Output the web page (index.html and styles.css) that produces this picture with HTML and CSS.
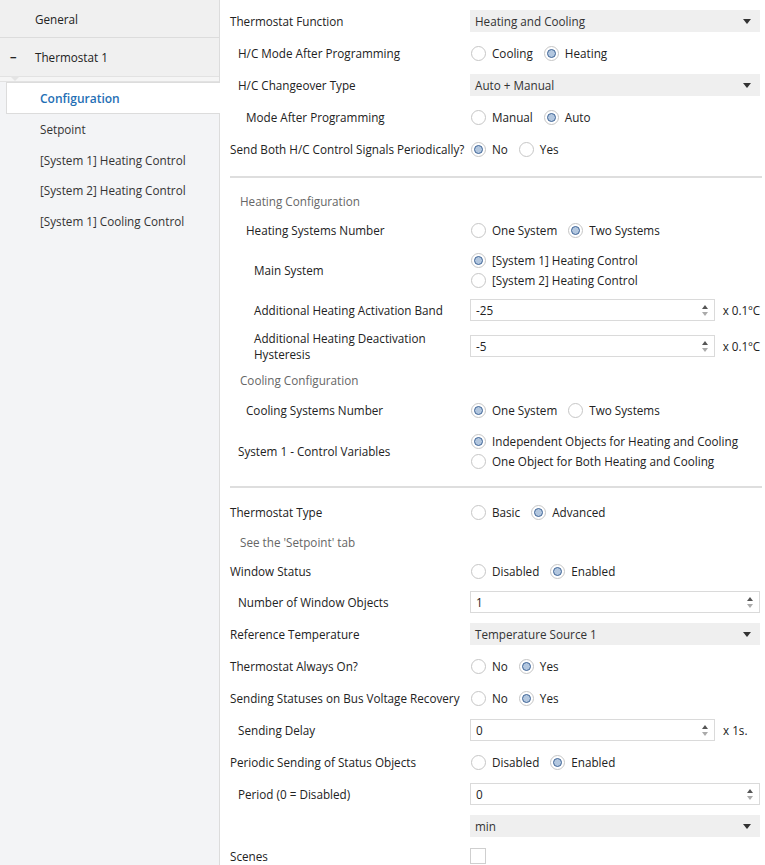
FILE: index.html
```html
<!DOCTYPE html>
<html lang="en">
<head>
<meta charset="UTF-8">
<meta name="viewport" content="width=device-width, initial-scale=1.0">
<title>Thermostat 1 - Configuration</title>
<link rel="stylesheet" href="styles.css">
</head>
<body>

<div class="app">

  <!-- left navigation -->
  <aside class="sidebar">
    <div class="nav-top">General</div>
    <div class="nav-group">
      <div class="nav-head"><span class="collapse">&minus;</span>Thermostat 1</div>
      <div class="nav-foot"><span class="notch"></span></div>
    </div>
    <ul class="nav-list">
      <li class="active">Configuration</li>
      <li>Setpoint</li>
      <li>[System 1] Heating Control</li>
      <li>[System 2] Heating Control</li>
      <li>[System 1] Cooling Control</li>
    </ul>
  </aside>

  <!-- parameters -->
  <main class="params">

    <div class="row">
      <div class="label">Thermostat Function</div>
      <div class="ctrl"><div class="select">Heating and Cooling<span class="caret"></span></div></div>
    </div>
    <div class="row">
      <div class="label l1">H/C Mode After Programming</div>
      <div class="ctrl radios">
        <span class="opt"><i class="radio"></i>Cooling</span>
        <span class="opt"><i class="radio on"></i>Heating</span>
      </div>
    </div>
    <div class="row">
      <div class="label l1">H/C Changeover Type</div>
      <div class="ctrl"><div class="select">Auto + Manual<span class="caret"></span></div></div>
    </div>
    <div class="row">
      <div class="label l2">Mode After Programming</div>
      <div class="ctrl radios">
        <span class="opt"><i class="radio"></i>Manual</span>
        <span class="opt"><i class="radio on"></i>Auto</span>
      </div>
    </div>
    <div class="row">
      <div class="label">Send Both H/C Control Signals Periodically?</div>
      <div class="ctrl radios">
        <span class="opt"><i class="radio on"></i>No</span>
        <span class="opt"><i class="radio"></i>Yes</span>
      </div>
    </div>

    <hr class="sep first">

    <div class="row head short"><div class="note">Heating Configuration</div></div>
    <div class="row">
      <div class="label l2">Heating Systems Number</div>
      <div class="ctrl radios">
        <span class="opt"><i class="radio"></i>One System</span>
        <span class="opt"><i class="radio on"></i>Two Systems</span>
      </div>
    </div>
    <div class="row tall">
      <div class="label l3">Main System</div>
      <div class="ctrl radios stack">
        <span class="opt"><i class="radio on"></i>[System 1] Heating Control</span>
        <span class="opt"><i class="radio"></i>[System 2] Heating Control</span>
      </div>
    </div>
    <div class="row">
      <div class="label l3">Additional Heating Activation Band</div>
      <div class="ctrl unit-wrap">
        <div class="num">-25<span class="spin"></span></div><span class="unit">x 0.1ºC</span>
      </div>
    </div>
    <div class="row two">
      <div class="label l3 wrap">Additional Heating Deactivation Hysteresis</div>
      <div class="ctrl unit-wrap">
        <div class="num">-5<span class="spin"></span></div><span class="unit">x 0.1ºC</span>
      </div>
    </div>

    <div class="row head"><div class="note">Cooling Configuration</div></div>
    <div class="row">
      <div class="label l2">Cooling Systems Number</div>
      <div class="ctrl radios">
        <span class="opt"><i class="radio on"></i>One System</span>
        <span class="opt"><i class="radio"></i>Two Systems</span>
      </div>
    </div>
    <div class="row tall wide">
      <div class="label l1">System 1 - Control Variables</div>
      <div class="ctrl radios stack">
        <span class="opt"><i class="radio on"></i>Independent Objects for Heating and Cooling</span>
        <span class="opt"><i class="radio"></i>One Object for Both Heating and Cooling</span>
      </div>
    </div>

    <hr class="sep second">

    <div class="row">
      <div class="label">Thermostat Type</div>
      <div class="ctrl radios">
        <span class="opt"><i class="radio"></i>Basic</span>
        <span class="opt"><i class="radio on"></i>Advanced</span>
      </div>
    </div>
    <div class="row head"><div class="note">See the 'Setpoint' tab</div></div>
    <div class="row win">
      <div class="label">Window Status</div>
      <div class="ctrl radios">
        <span class="opt"><i class="radio"></i>Disabled</span>
        <span class="opt"><i class="radio on"></i>Enabled</span>
      </div>
    </div>
    <div class="row">
      <div class="label l1">Number of Window Objects</div>
      <div class="ctrl"><div class="num full">1<span class="spin"></span></div></div>
    </div>
    <div class="row">
      <div class="label">Reference Temperature</div>
      <div class="ctrl"><div class="select">Temperature Source 1<span class="caret"></span></div></div>
    </div>
    <div class="row">
      <div class="label">Thermostat Always On?</div>
      <div class="ctrl radios">
        <span class="opt"><i class="radio"></i>No</span>
        <span class="opt"><i class="radio on"></i>Yes</span>
      </div>
    </div>
    <div class="row">
      <div class="label">Sending Statuses on Bus Voltage Recovery</div>
      <div class="ctrl radios">
        <span class="opt"><i class="radio"></i>No</span>
        <span class="opt"><i class="radio on"></i>Yes</span>
      </div>
    </div>
    <div class="row">
      <div class="label l1">Sending Delay</div>
      <div class="ctrl unit-wrap">
        <div class="num">0<span class="spin"></span></div><span class="unit">x 1s.</span>
      </div>
    </div>
    <div class="row">
      <div class="label">Periodic Sending of Status Objects</div>
      <div class="ctrl radios">
        <span class="opt"><i class="radio"></i>Disabled</span>
        <span class="opt"><i class="radio on"></i>Enabled</span>
      </div>
    </div>
    <div class="row">
      <div class="label l1">Period (0 = Disabled)</div>
      <div class="ctrl"><div class="num full">0<span class="spin"></span></div></div>
    </div>
    <div class="row">
      <div class="label"></div>
      <div class="ctrl"><div class="select">min<span class="caret"></span></div></div>
    </div>
    <div class="row head">
      <div class="label">Scenes</div>
      <div class="ctrl"><span class="check"></span></div>
    </div>

  </main>
</div>

</body>
</html>
```

FILE: styles.css
```css
/* page */
body {
  margin: 0;
  font-family: "Open Sans", "Noto Sans", sans-serif;
  font-size: 11.7px;
  color: #222;
  background: #fff;
}

.app {
  display: flex;
  min-height: 865px;
}

/* sidebar */
.sidebar {
  width: 219px;
  flex-shrink: 0;
  background: #f3f4f6;
  border-right: 1px solid #dcdcdc;
}

.nav-top {
  height: 37px;
  line-height: 38px;
  padding-left: 35px;
  background: #f0f0f0;
  border-bottom: 1px solid #dcdcdc;
}

.nav-group {
  background: #f0f0f0;
}

.nav-head {
  height: 38px;
  line-height: 38px;
  padding-left: 10px;
}

.collapse {
  display: inline-block;
  width: 25px;
  font-weight: bold;
}

.nav-foot {
  position: relative;
  height: 4px;
  background: #f5f5f5;
  border-top: 1px solid #e2e2e2;
  border-bottom: 1px solid #e2e2e2;
}

.notch {
  position: absolute;
  left: 10px;
  top: -1px;
  width: 0;
  height: 0;
  border-left: 5px solid transparent;
  border-right: 5px solid transparent;
  border-top: 5px solid #e4e4e4;
}

.nav-list {
  list-style: none;
  margin: 0;
  padding: 0;
}

.nav-list li {
  height: 30.7px;
  line-height: 30px;
  padding-left: 40px;
  color: #333;
}

.nav-list li.active {
  margin-left: 6px;
  margin-right: -1px;
  padding-left: 33px;
  height: 30px;
  line-height: 31px;
  background: #fff;
  border: 1px solid #dcdcdc;
  border-right: none;
  color: #1f6fb5;
  font-weight: 600;
  font-size: 12px;
}

/* parameter rows */
.params {
  flex: 1;
  padding: 5px 3px 0 10px;
}

.row {
  display: flex;
  align-items: center;
  height: 32px;
}

.row.head { height: 28px; }
.row.short { height: 26px; }
.row.tall { height: 48px; }
.row.wide { height: 50px; }
.row.two { height: 40px; }
.row.win { height: 30px; }

.label {
  width: 240px;
  flex-shrink: 0;
  white-space: nowrap;
}

.label.l1 { padding-left: 8px; width: 232px; }
.label.l2 { padding-left: 16px; width: 224px; }
.label.l3 { padding-left: 24px; width: 216px; }

.label.wrap {
  white-space: normal;
  width: 180px;
  padding-right: 36px;
  line-height: 16px;
}

.note {
  padding-left: 10px;
  color: #666;
}

.ctrl {
  width: 290px;
}

.sep {
  border: none;
  border-top: 2px solid #dedede;
  margin: 11px 0 10px 0;
}

.sep.second {
  margin: 10px 0 8px 0;
}

/* select boxes */
.select {
  position: relative;
  height: 22px;
  line-height: 22px;
  padding-left: 5px;
  background: #efefef;
  color: #333;
}

.caret {
  position: absolute;
  right: 9px;
  top: 9px;
  border-left: 4px solid transparent;
  border-right: 4px solid transparent;
  border-top: 5px solid #333;
}

/* radios */
.radios {
  display: flex;
  align-items: center;
}

.radios.stack {
  flex-direction: column;
  align-items: flex-start;
  gap: 4px;
}

.opt {
  display: flex;
  align-items: center;
  height: 16px;
  margin-right: 10px;
  white-space: nowrap;
}

.radio {
  position: relative;
  width: 15px;
  height: 15px;
  margin-left: 1px;
  margin-right: 6px;
  box-sizing: border-box;
  border: 1px solid #c6c6c6;
  border-radius: 50%;
  background: #fff;
}

.radio.on::after {
  content: "";
  position: absolute;
  left: 2px;
  top: 2px;
  width: 9px;
  height: 9px;
  box-sizing: border-box;
  border: 1.5px solid #3e6496;
  border-radius: 50%;
  background: #b3c7df;
}

/* number inputs */
.unit-wrap {
  display: flex;
  align-items: center;
}

.num {
  position: relative;
  width: 245px;
  height: 22px;
  line-height: 20px;
  box-sizing: border-box;
  padding-left: 5px;
  border: 1px solid #dadada;
  background: #fff;
}

.num.full {
  width: 290px;
}

.spin {
  position: absolute;
  right: 6px;
  top: 5px;
  width: 0;
  height: 0;
  border-left: 3px solid transparent;
  border-right: 3px solid transparent;
  border-bottom: 4px solid #555;
}

.spin::after {
  content: "";
  position: absolute;
  left: -3px;
  top: 7px;
  border-left: 3px solid transparent;
  border-right: 3px solid transparent;
  border-top: 4px solid #aaa;
}

.unit {
  margin-left: 8px;
  white-space: nowrap;
}

.check {
  display: block;
  width: 16px;
  height: 16px;
  box-sizing: border-box;
  border: 1px solid #cfcfcf;
  background: #fff;
}
```
